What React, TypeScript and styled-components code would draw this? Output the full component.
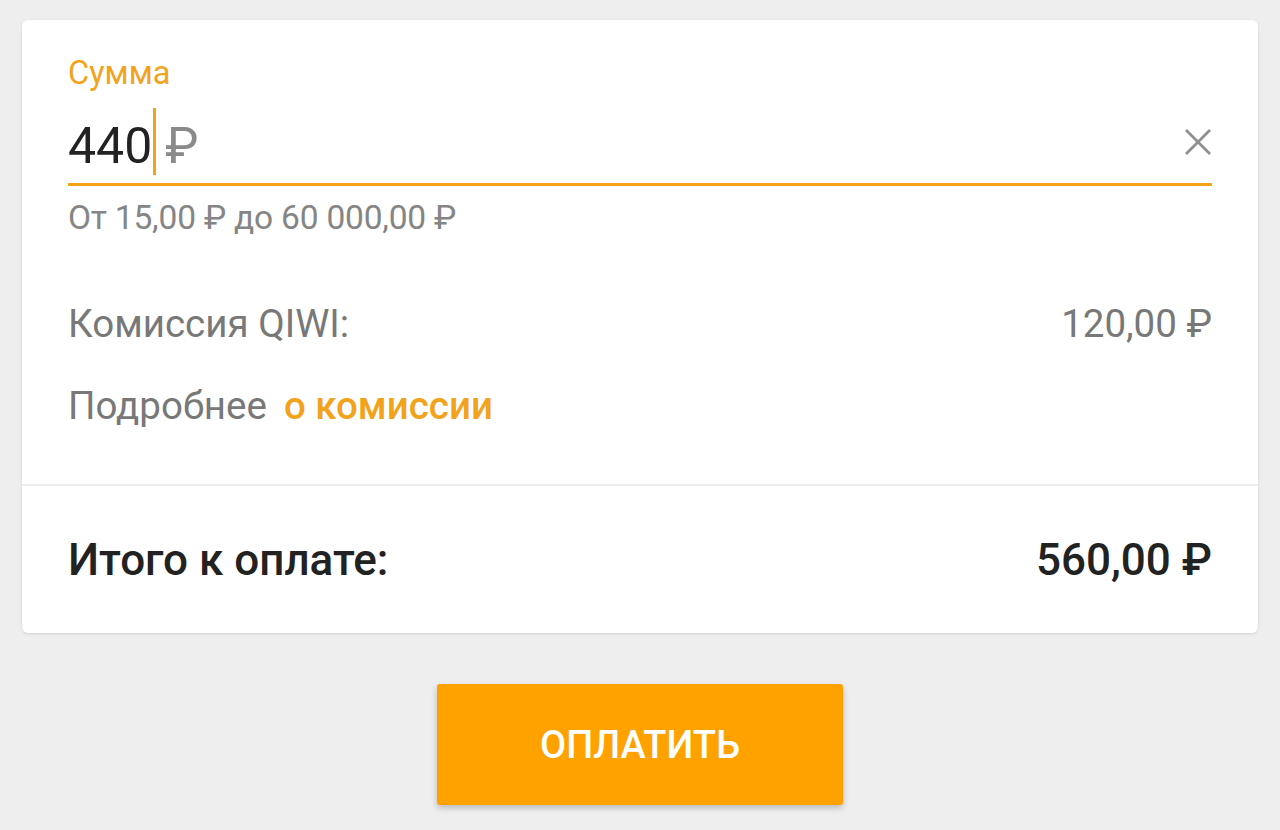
import React from "react";
import styled, { createGlobalStyle } from "styled-components";

const GlobalStyle = createGlobalStyle`
  html, body {
    margin: 0;
    padding: 0;
    background: #eeeeee;
    font-family: Roboto, "Noto Sans", "Liberation Sans", sans-serif;
  }
  * { box-sizing: border-box; }
`;

const Page = styled.div`
  width: 1280px;
  height: 830px;
  padding: 20px 22px 0;
  display: flex;
  flex-direction: column;
  align-items: stretch;
  overflow: hidden;
`;

const Card = styled.div`
  background: #ffffff;
  border-radius: 6px;
  box-shadow: 0 1px 3px rgba(0, 0, 0, 0.12);
  display: flex;
  flex-direction: column;
`;

const TopSection = styled.div`
  padding: 36px 46px 0;
  height: 464px;
  display: flex;
  flex-direction: column;
`;

const Label = styled.div`
  font-size: 32.5px;
  line-height: 34px;
  color: #f2a31b;
`;

const InputRow = styled.div`
  margin-top: 18px;
  height: 78px;
  padding-bottom: 7px;
  border-bottom: 3px solid #f4a414;
  display: flex;
  align-items: flex-end;
`;

const Value = styled.span`
  font-size: 50px;
  line-height: 60px;
  color: #222222;
`;

const Caret = styled.span`
  align-self: stretch;
  width: 3px;
  margin: 0 9px 1px 1px;
  background: #f4a414;
`;

const Currency = styled.span`
  font-size: 50px;
  line-height: 60px;
  color: #8a8a8a;
  flex: 1;
`;

const ClearButton = styled.button`
  align-self: center;
  border: 0;
  padding: 0;
  background: transparent;
  width: 28px;
  height: 28px;
  display: flex;
  align-items: center;
  justify-content: center;
  cursor: pointer;
`;

const Hint = styled.div`
  margin-top: 14px;
  font-size: 33.5px;
  line-height: 36px;
  color: #858585;
  letter-spacing: -0.2px;
`;

const InfoRow = styled.div<{ $gap: number }>`
  margin-top: ${(p) => p.$gap}px;
  display: flex;
  justify-content: space-between;
  font-size: 38.5px;
  line-height: 40px;
  color: #787878;
`;

const Link = styled.a`
  color: #f2a31b;
  font-weight: 500;
  text-decoration: none;
  margin-left: 17px;
`;

const Divider = styled.div`
  height: 2px;
  background: #ececec;
`;

const TotalSection = styled.div`
  padding: 49px 46px 48px;
  display: flex;
  justify-content: space-between;
  font-size: 44px;
  line-height: 50px;
  font-weight: 500;
  color: #222222;
`;

const ButtonWrap = styled.div`
  margin-top: 51px;
  display: flex;
  justify-content: center;
`;

const PayButton = styled.button`
  width: 406px;
  height: 121px;
  border: 0;
  border-radius: 3px;
  background: #ffa200;
  color: #ffffff;
  font-family: Roboto, "Noto Sans", sans-serif;
  font-size: 38px;
  font-weight: 500;
  text-transform: uppercase;
  box-shadow: 0 3px 6px rgba(0, 0, 0, 0.22);
  cursor: pointer;
`;

export default function App() {
  return (
    <>
      <GlobalStyle />
      <Page>
        <Card>
          <TopSection>
            <Label>Сумма</Label>
            <InputRow>
              <Value>440</Value>
              <Caret />
              <Currency>₽</Currency>
              <ClearButton aria-label="Очистить">
                <svg width="28" height="28" viewBox="0 0 28 28">
                  <path
                    d="M2 2 L26 26 M26 2 L2 26"
                    stroke="#8f8f8f"
                    strokeWidth="2.8"
                    fill="none"
                  />
                </svg>
              </ClearButton>
            </InputRow>
            <Hint>От 15,00 ₽ до 60 000,00 ₽</Hint>
            <InfoRow $gap={68}>
              <span>Комиссия QIWI:</span>
              <span>120,00 ₽</span>
            </InfoRow>
            <InfoRow $gap={42}>
              <span>
                Подробнее<Link href="#">о комиссии</Link>
              </span>
            </InfoRow>
          </TopSection>
          <Divider />
          <TotalSection>
            <span>Итого к оплате:</span>
            <span>560,00 ₽</span>
          </TotalSection>
        </Card>
        <ButtonWrap>
          <PayButton>Оплатить</PayButton>
        </ButtonWrap>
      </Page>
    </>
  );
}
